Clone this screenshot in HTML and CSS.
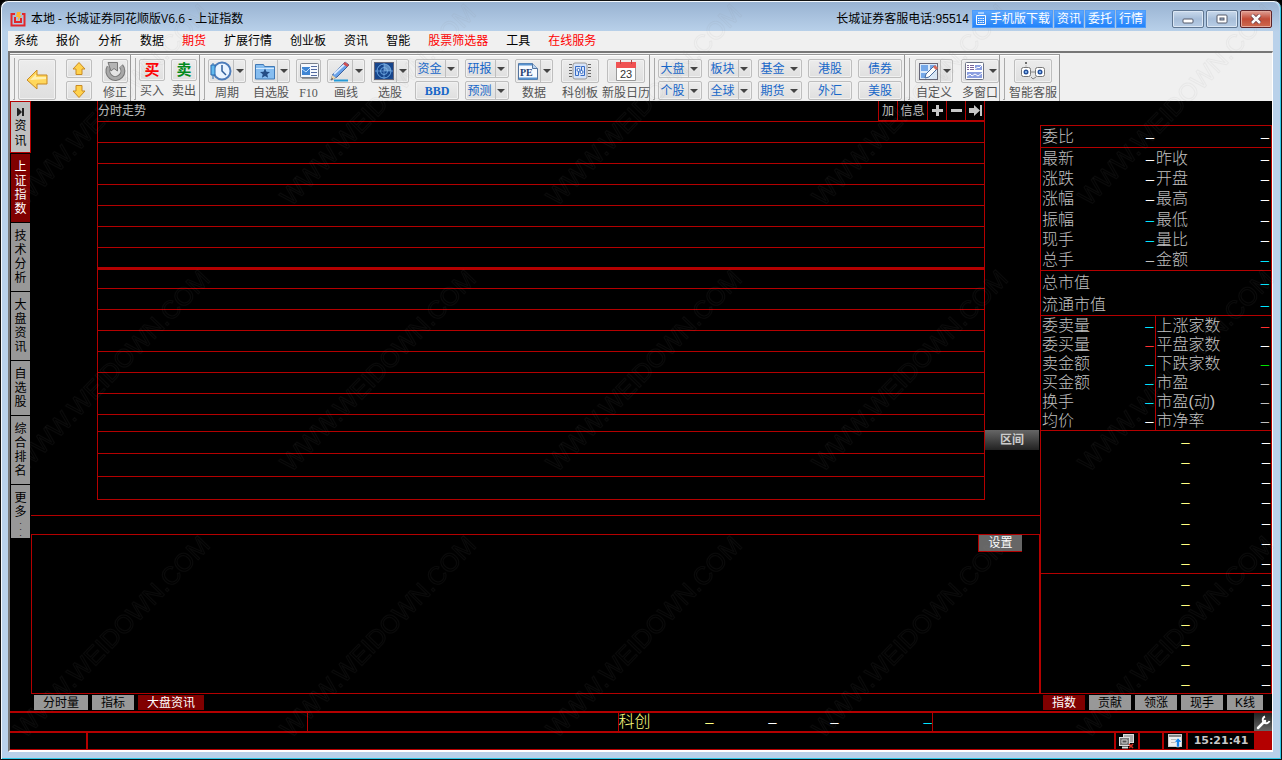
FILE: index.html
```html
<!DOCTYPE html>
<html lang="zh-CN">
<head>
<meta charset="utf-8">
<title>本地 - 长城证券同花顺版V6.6 - 上证指数</title>
<link rel="stylesheet" href="styles.css">
</head>
<body>
<div class="window">
  <header class="titlebar">
    <svg class="logo" width="17" height="15" viewBox="0 0 17 15"><path d="M5 2H1.500v11.500h13V2H12" fill="none" stroke="#e3262b" stroke-width="2"/><path d="M5 5v5h6V6" fill="none" stroke="#e3262b" stroke-width="2"/><path d="M7 0h4L9.500 3.500H12L7.500 9l1-4H6z" fill="#ffb52e"/></svg>
    <h1 class="title">本地 - 长城证券同花顺版V6.6 - 上证指数</h1>
    <span class="phone">长城证券客服电话:95514</span>
    <nav class="quick">
      <a href="#" class="quick-link"><svg width="12" height="14" viewBox="0 0 12 14"><path d="M3 1h6M1.500 3.500h9v9h-9z" fill="none" stroke="#fff"/><path d="M3 6.500h6M3 8.500h6M3 10.500h6" stroke="#fff" stroke-dasharray="1.500 .75"/></svg>手机版下载</a>
      <a href="#" class="quick-link">资讯</a>
      <a href="#" class="quick-link">委托</a>
      <a href="#" class="quick-link">行情</a>
    </nav>
    <div class="controls">
      <button class="control" aria-label="最小化"><svg width="12" height="10"><rect x="1" y="5" width="10" height="4" rx="1" fill="#fff" stroke="#555a6b"/></svg></button>
      <button class="control" aria-label="最大化"><svg width="12" height="10"><rect x="1" y="1" width="10" height="8" rx="1" fill="#fff" stroke="#555a6b"/><rect x="4" y="4" width="4" height="2" fill="#9fb5d0" stroke="#555a6b"/></svg></button>
      <button class="control close" aria-label="关闭"><svg width="12" height="10"><path d="M2 1l8 8M10 1L2 9" stroke="#60303a" stroke-width="4"/><path d="M2 1l8 8M10 1L2 9" stroke="#fff" stroke-width="2.500"/></svg></button>
    </div>
  </header>
  <nav class="menu">
    <a href="#">系统</a><a href="#">报价</a><a href="#">分析</a><a href="#">数据</a><a href="#" class="hot">期货</a><a href="#">扩展行情</a><a href="#">创业板</a><a href="#">资讯</a><a href="#">智能</a><a href="#" class="hot">股票筛选器</a><a href="#">工具</a><a href="#" class="hot">在线服务</a>
  </nav>
  <div class="view">
    <div class="toolbar">
      <div class="group end-2"><i class="grip"></i><div class="tools loose">
        <button class="btn big" aria-label="后退"><svg width="24" height="24" viewBox="0 0 24 24"><path d="M2 12L12 2v5h10v9H12v5z" fill="#ffd75c" stroke="#c98a22" stroke-linejoin="round"/><path d="M5 12l6-6v3h10v2z" fill="#fff0b0"/></svg></button>
        <div class="stack narrow">
          <button class="btn small" aria-label="上"><svg width="16" height="16" viewBox="0 0 16 16"><path d="M8 1.500L14 8h-3v5.500H5V8H2z" fill="#ffd24d" stroke="#c98a22" stroke-linejoin="round"/></svg></button>
          <button class="btn small" aria-label="下"><svg width="16" height="16" viewBox="0 0 16 16"><path d="M8 14.500L14 8h-3V2.500H5V8H2z" fill="#ffd24d" stroke="#c98a22" stroke-linejoin="round"/></svg></button>
        </div>
        <div class="item narrow"><button class="btn" id="fix"><svg width="24" height="22" viewBox="0 0 24 22"><path d="M6 7a7.500 7.500 0 1 0 12-1" fill="none" stroke="#777" stroke-width="5"/><path d="M6 7a7.500 7.500 0 1 0 12-1" fill="none" stroke="#a8a8a8" stroke-width="3"/><path d="M5 2.500h9.500V11L11 8.500 8 11z" fill="#b4b4b4" stroke="#777"/></svg></button><label for="fix">修正</label></div>
      </div></div>
      <div class="group end-2"><i class="grip"></i><div class="tools">
        <div class="item narrow"><button class="btn buy" id="buy">买</button><label for="buy">买入</label></div>
        <div class="item narrow"><button class="btn sell" id="sell">卖</button><label for="sell">卖出</label></div>
      </div></div>
      <div class="group end-4"><i class="grip"></i><div class="tools">
        <div class="item"><button class="btn split" id="period"><svg width="24" height="22" viewBox="0 0 24 22"><circle cx="13" cy="11" r="8.500" fill="#eaf4ff" stroke="#4d7cba" stroke-width="2"/><path d="M13 5v6l4 4" fill="none" stroke="#305f9b" stroke-width="1.500"/><path d="M4 3v16" stroke="#2769ae"/><path d="M2 5h4v10H2z" fill="#62b9ee" stroke="#2769ae"/></svg><span class="arrow"></span></button><label for="period">周期</label></div>
        <div class="item"><button class="btn split" id="fav"><svg width="24" height="22" viewBox="0 0 24 22"><path d="M2.500 19V4.500h8l1 2h10V19z" fill="#86bdf0" stroke="#417ab7"/><path d="M3 8.500h18" stroke="#d4eaff"/><path d="M12 8.500l1.500 3.300 3.500.2-2.700 2.300.8 3.400-3.100-1.800-3.100 1.800.8-3.400L7 12l3.500-.2z" fill="#244e86"/></svg><span class="arrow"></span></button><label for="fav">自选股</label></div>
        <div class="item f10"><button class="btn" id="f10"><svg width="24" height="22" viewBox="0 0 24 22"><rect x="3.500" y="3.500" width="18" height="14" rx="1" fill="#f5f8fd" stroke="#777f8c"/><path d="M5 7h8v8H5z" fill="#3f85d4"/><path d="M5 9l4 3 4-4" stroke="#bfe0ff" fill="none"/><path d="M14 6.500h6M14 9.500h6M14 12.500h6M14 15.500h6" stroke="#536aa0"/><path d="M5 18.500h16" stroke="#999"/></svg></button><label for="f10">F10</label></div>
        <div class="item"><button class="btn split" id="draw"><svg width="24" height="22" viewBox="0 0 24 22"><path d="M6 20.500h14" stroke="#249ad7" stroke-width="2"/><path d="M3 20l2-6L17 2l4 3L9 17z" fill="#6aa2e8" stroke="#3b609c"/><path d="M6 14L18 3" stroke="#d7e9ff" stroke-width="2"/><path d="M17 2l4 3-2 2-4-3z" fill="#d15050"/><path d="M3 20l1-5 4 3z" fill="#efd6a8"/><path d="M3 20l1-2 1 1z" fill="#222"/></svg><span class="arrow"></span></button><label for="draw">画线</label></div>
        <div class="item"><button class="btn split" id="pick"><svg width="24" height="22" viewBox="0 0 24 22"><rect x="2.500" y="2.500" width="19" height="17" fill="#17458c" stroke="#667"/><path d="M12 3v16M3 11h18" stroke="#5789c8"/><circle cx="12" cy="11" r="7" fill="none" stroke="#69a4df"/><circle cx="12" cy="11" r="3.500" fill="none" stroke="#69a4df"/><path d="M12 11V4a7 7 0 0 1 7 7z" fill="#8bbbe8" opacity=".6"/></svg><span class="arrow"></span></button><label for="pick">选股</label></div>
        <div class="stack"><button class="btn small split">资金<span class="arrow"></span></button><button class="btn small bbd">BBD</button></div>
        <div class="stack"><button class="btn small split">研报<span class="arrow"></span></button><button class="btn small split">预测<span class="arrow"></span></button></div>
        <div class="item"><button class="btn split" id="pe"><svg width="24" height="22" viewBox="0 0 24 22"><path d="M2.500 3.500h14l5 5v11h-19z" fill="#f7faff" stroke="#54749f"/><path d="M16.500 3.500v5h5" fill="#b8d4f2" stroke="#54749f"/><path d="M3 18.500h18M3 4.500h13" stroke="#5792d0" stroke-width="2"/><text x="4" y="16" class="pe-text">PE</text></svg><span class="arrow"></span></button><label for="pe">数据</label></div>
        <div class="item wide"><button class="btn" id="star"><svg width="24" height="22" viewBox="0 0 24 22"><path d="M1 4.500h3m-3 3h3m-3 3h3m-3 3h3m-3 3h3M20 4.500h3m-3 3h3m-3 3h3m-3 3h3m-3 3h3" stroke="#666"/><rect x="5" y="3" width="14" height="16" rx="2" fill="#d7e3f7" stroke="#999"/><path d="M10.500 10v5.500h-3v-9h5M13.500 11V6.500h3v9h-4" fill="none" stroke="#376cc5"/><circle cx="10.500" cy="10" r="1.500" fill="#fff" stroke="#376cc5"/><circle cx="13.500" cy="12" r="1.500" fill="#fff" stroke="#376cc5"/></svg></button><label for="star">科创板</label></div>
        <div class="item"><button class="btn" id="cal"><svg width="24" height="22" viewBox="0 0 24 22"><path d="M2.500 3.500h19v17h-19z" fill="#fff" stroke="#999"/><path d="M2 2h20v6H2z" fill="#f05252"/><path d="M6.500 0v4M17.500 0v4" stroke="#b44"/><text x="6" y="18" class="cal-text">23</text></svg></button><label for="cal">新股日历</label></div>
      </div></div>
      <div class="group end-2"><i class="grip"></i><div class="tools">
        <div class="stack"><button class="btn small split">大盘<span class="arrow"></span></button><button class="btn small split">个股<span class="arrow"></span></button></div>
        <div class="stack"><button class="btn small split">板块<span class="arrow"></span></button><button class="btn small split">全球<span class="arrow"></span></button></div>
        <div class="stack"><button class="btn small split joined">基金<span class="arrow"></span></button><button class="btn small split joined">期货<span class="arrow"></span></button></div>
        <div class="stack"><button class="btn small">港股</button><button class="btn small">外汇</button></div>
        <div class="stack"><button class="btn small">债券</button><button class="btn small">美股</button></div>
      </div></div>
      <div class="group"><i class="grip"></i><div class="tools spaced">
        <div class="item"><button class="btn split" id="custom"><svg width="24" height="22" viewBox="0 0 24 22"><rect x="3.500" y="3.500" width="18" height="16" fill="#dceafa" stroke="#667"/><path d="M5 5h7v6H5zM14 5h6v6h-6zM5 13h7v5H5z" fill="#75a8e8"/><path d="M9 18l1-4 8-8 3 3-8 8z" fill="#fff" stroke="#476a9e"/><path d="M17 7l2-2 3 3-2 2z" fill="#d66b5b"/></svg><span class="arrow"></span></button><label for="custom">自定义</label></div>
        <div class="item"><button class="btn split joined" id="multi"><svg width="24" height="22" viewBox="0 0 24 22"><rect x="3.500" y="2.500" width="18" height="17" rx="1" fill="#fff" stroke="#6d7486"/><path d="M5 5.500h7M5 7.500h7M5 9.500h7" stroke="#786299" stroke-dasharray="2 1 6"/><path d="M13 5h7v5h-7zM5 12h15v6H5z" fill="#8a9ee0"/><path d="M13 9l3-2 1 1 3-3M5 16l3-2 2 2 3-2 3 2 4-3" stroke="#fff" fill="none"/></svg><span class="arrow"></span></button><label for="multi">多窗口</label></div>
      </div></div>
      <div class="group service"><i class="grip"></i><div class="tools spaced">
        <div class="item"><button class="btn" id="bot"><svg width="26" height="22" viewBox="0 0 26 22"><circle cx="6" cy="3" r="1" fill="#444"/><path d="M6 5v2" stroke="#bbb"/><rect x="1.500" y="7.500" width="9" height="9" rx="2" fill="#fff" stroke="#777"/><rect x="15.500" y="7.500" width="9" height="9" rx="2" fill="#fff" stroke="#777"/><path d="M10 12h5M11 17l2 2 3-2" stroke="#888" fill="none"/><circle cx="6" cy="12" r="2.500" fill="#254f9a"/><circle cx="20" cy="12" r="2.500" fill="#254f9a"/><circle cx="6" cy="12" r="1" fill="#9cf"/><circle cx="20" cy="12" r="1" fill="#9cf"/></svg></button><label for="bot">智能客服</label></div>
      </div></div>
    </div>

    <main class="main">
      <nav class="rail">
        <button class="rail-tab news"><svg width="9" height="8" viewBox="0 0 9 8"><path d="M1 0h1l4 4-4 4H1z" fill="#222"/><path d="M7 0v8" stroke="#222" stroke-width="2"/></svg><span>资讯</span></button>
        <button class="rail-tab active"><span>上证指数</span></button>
        <button class="rail-tab"><span>技术分析</span></button>
        <button class="rail-tab"><span>大盘资讯</span></button>
        <button class="rail-tab"><span>自选股</span></button>
        <button class="rail-tab"><span>综合排名</span></button>
        <button class="rail-tab more"><span>更多</span><i>.</i><i>.</i><i>.</i></button>
      </nav>

      <section class="center">
        <div class="chart-area">
          <div class="chart">
            <div class="chart-head"><h2>分时走势</h2>
              <div class="chart-tools">
                <button>加</button><button class="info">信息</button>
                <button aria-label="放大"><svg width="11" height="11"><path d="M5.500 0v11M0 5.500h11" stroke="#c8c8c8" stroke-width="3"/></svg></button>
                <button aria-label="缩小"><svg width="11" height="11"><path d="M0 5.500h11" stroke="#c8c8c8" stroke-width="3"/></svg></button>
                <button aria-label="末端"><svg width="13" height="11"><path d="M0 3h5V0l6 5.500L5 11V8H0z" fill="#c8c8c8"/><path d="M12 0v11" stroke="#c8c8c8" stroke-width="2"/></svg></button>
              </div>
            </div>
            <div class="line"></div><div class="line"></div><div class="line"></div><div class="line"></div><div class="line"></div><div class="line"></div>
            <div class="line mid"></div>
            <div class="line"></div><div class="line"></div><div class="line"></div><div class="line"></div><div class="line"></div><div class="line"></div><div class="line"></div>
            <div class="line short"></div><div class="line volume"></div><div class="line volume"></div><div class="line volume"></div>
          </div>
          <button class="range">区间</button>
        </div>
        <div class="time-axis"></div>
        <div class="ticker"></div>
        <div class="news-box"><button class="settings">设置</button></div>
        <div class="tabs"><button class="tab">分时量</button><button class="tab">指标</button><button class="tab active">大盘资讯</button></div>
      </section>

      <aside class="quote">
        <div class="quote-body">
          <table class="figures head">
            <tr><th>委比</th><td>–</td><th></th><td>–</td></tr>
          </table>
          <table class="figures price">
            <tr><th>最新</th><td>–</td><th>昨收</th><td>–</td></tr>
            <tr><th>涨跌</th><td>–</td><th>开盘</th><td>–</td></tr>
            <tr><th>涨幅</th><td>–</td><th>最高</th><td>–</td></tr>
            <tr><th>振幅</th><td class="cyan">–</td><th>最低</th><td>–</td></tr>
            <tr><th>现手</th><td class="cyan">–</td><th>量比</th><td>–</td></tr>
            <tr><th>总手</th><td class="gray">–</td><th>金额</th><td class="cyan">–</td></tr>
          </table>
          <table class="figures cap">
            <tr><th colspan="3">总市值</th><td class="cyan">–</td></tr>
            <tr><th colspan="3">流通市值</th><td class="cyan">–</td></tr>
          </table>
          <table class="figures detail">
            <tr><th>委卖量</th><td class="cyan">–</td><th>上涨家数</th><td class="red">–</td></tr>
            <tr><th>委买量</th><td class="red">–</td><th>平盘家数</th><td>–</td></tr>
            <tr><th>卖金额</th><td class="cyan">–</td><th>下跌家数</th><td class="green">–</td></tr>
            <tr><th>买金额</th><td class="cyan">–</td><th>市盈</th><td class="gray">–</td></tr>
            <tr><th>换手</th><td class="cyan">–</td><th>市盈(动)</th><td class="gray">–</td></tr>
            <tr><th>均价</th><td>–</td><th>市净率</th><td class="gray">–</td></tr>
          </table>
          <table class="ticks upper">
            <tr><td class="yellow">–</td><td>–</td></tr><tr><td class="yellow">–</td><td>–</td></tr><tr><td class="yellow">–</td><td>–</td></tr><tr><td class="yellow">–</td><td>–</td></tr><tr><td class="yellow">–</td><td>–</td></tr><tr><td class="yellow">–</td><td>–</td></tr><tr><td class="yellow">–</td><td>–</td></tr>
          </table>
          <table class="ticks lower">
            <tr><td class="yellow">–</td><td>–</td></tr><tr><td class="yellow">–</td><td>–</td></tr><tr><td class="yellow">–</td><td>–</td></tr><tr><td class="yellow">–</td><td>–</td></tr><tr><td class="yellow">–</td><td>–</td></tr><tr><td class="yellow">–</td><td>–</td></tr>
          </table>
        </div>
        <div class="tabs"><button class="tab active">指数</button><button class="tab">贡献</button><button class="tab">领涨</button><button class="tab">现手</button><button class="tab k">K线</button></div>
      </aside>
    </main>

    <div class="status index">
      <div class="cell"></div><div class="cell second"></div>
      <div class="cell board"><span class="yellow name">科创</span><span class="yellow">–</span><span>–</span><span>–</span><span class="cyan">–</span></div>
      <div class="cell rest"></div>
      <button class="wrench" aria-label="设置"><svg width="15" height="15" viewBox="0 0 15 15"><path d="M2 13l7-7" stroke="#fff" stroke-width="2.500" stroke-linecap="round"/><path d="M9 1.500a3.500 3.500 0 1 0 4.500 4.500" fill="none" stroke="#fff" stroke-width="2"/></svg></button>
    </div>
    <footer class="status foot">
      <div class="cell slot"></div><div class="cell fill"></div>
      <div class="cell net"><svg width="16" height="15" viewBox="0 0 16 15"><rect x="4.500" y=".5" width="10" height="8" fill="#aaa" stroke="#ddd"/><rect x=".5" y="3.500" width="10" height="8" fill="#777" stroke="#ddd"/><path d="M3 6h5v3H3z" fill="#555" stroke="#ccc"/><path d="M3 13.500h6" stroke="#ddd" stroke-width="2"/><path d="M10 10l4 4M14 10l-4 4" stroke="#d83020" stroke-width="1.500"/></svg></div>
      <div class="cell net"></div>
      <div class="cell net"><svg width="15" height="14" viewBox="0 0 15 14"><rect x=".5" y=".5" width="13" height="12" fill="#eee" stroke="#ccc"/><path d="M1 2h12" stroke="#888" stroke-width="2"/><path d="M3 5.500h7M3 8.500h5" stroke="#bbb"/><path d="M10 4l4 4h-2.500v5h-3V8H6.500z" fill="#1683ea" stroke="#fff" stroke-width=".5"/></svg></div>
      <time class="clock">15:21:41</time>
      <div class="alert"></div>
    </footer>
  </div>
  <svg class="watermark" aria-hidden="true"><defs><pattern id="mark" x="-10" y="-50" width="266" height="266" patternUnits="userSpaceOnUse"><text transform="translate(34 256) rotate(-46)">WWW.WEIDOWN.COM</text></pattern></defs><rect width="100%" height="100%" fill="url(#mark)"/></svg>
</div>
</body>
</html>
```
FILE: styles.css
```css
* { box-sizing: border-box; }
:root { --red: #b40000; --line: 1px solid var(--red); }
body { margin: 0; background: #000; font: 12px/16px "Liberation Sans", "Noto Sans CJK SC", sans-serif; }
button { margin: 0; padding: 0; border: 0; font: inherit; color: inherit; background: none; }
a { color: inherit; text-decoration: none; }
h1, h2 { margin: 0; font: inherit; }
svg { display: block; flex: none; }

.window { position: relative; min-height: 100vh; display: flex; flex-direction: column; padding: 0 8px 7px 7px; border: 1px solid #111; border-radius: 8px 8px 0 0; background: #b9d1ea; box-shadow: inset 1px 1px #f4f8fc, inset -1px -1px #2fc8e8; overflow: hidden; }
.titlebar { height: 30px; display: flex; align-items: center; margin: 1px -6px -1px; padding: 4px 7px 0 6px; border-radius: 7px 7px 0 0; background: linear-gradient(#99b3d2, #b9d1ea); }
.logo { margin: 0 4px 0 2px; }
.title { flex: 1; font-family: "Open Sans", "Noto Sans CJK SC", sans-serif; }
.phone { margin-right: 3px; white-space: nowrap; }
.quick { display: flex; gap: 1px; }
.quick-link { display: flex; align-items: center; gap: 3px; height: 18px; padding: 0 2px; color: #fff; background: linear-gradient(#5aa6ff, #2283fb); border: 1px solid #4c9cfb; }
.controls { display: flex; gap: 2px; margin: 0 0 0 26px; }
.control { width: 32px; height: 18px; display: grid; place-items: center; border: 1px solid #5f7691; border-radius: 2px; background: linear-gradient(#c9d9ec, #a7bed9 50%, #b8cde5); box-shadow: inset 0 0 0 1px #dbe7f4; }
.close { border-color: #5b2228; background: linear-gradient(#e2a196, #c34a35 50%, #cf6a4e); box-shadow: inset 0 0 0 1px #e6a99c; }

.menu { height: 20px; display: flex; gap: 18px; padding: 2px 6px 0; background: #f0f0f0; white-space: nowrap; }
.hot { color: #f00; }
.view { flex: 1; display: flex; flex-direction: column; border: solid; border-width: 2px 1px 2px 2px; border-color: #777 #fff #fff #777; background: #000; }

.toolbar { height: 48px; display: flex; padding-top: 1px; background: #f0f0f0; color: #555; }
.group { display: flex; border-top: 1px solid #999; border-right: 1px solid #999; box-shadow: inset 0 1px #fff; }
.end-2 { padding-right: 2px; }
.end-4 { padding-right: 4px; }
.grip { width: 2px; margin: 3px 0 1px 3px; border: solid #aaa; border-width: 0 1px 1px 0; }
.tools { display: flex; gap: 6px; padding: 4px 0 0 3px; }
.loose { gap: 10px; }
.spaced { gap: 8px; padding-left: 5px; }
.service { padding-right: 7px; }
.service .tools { padding-left: 9px; }
.item { width: 38px; display: flex; flex-direction: column; align-items: center; white-space: nowrap; }
.item label { line-height: 20px; }
.narrow { width: 26px; }
.wide { width: 42px; }
.wide .btn { width: 38px; }
.f10 { width: 25px; font-family: "Liberation Serif", serif; }
.btn { width: 100%; height: 25px; display: flex; justify-content: center; align-items: center; border: 1px solid #bebebe; border-radius: 2px; background: linear-gradient(#ececec, #dfdfdf); box-shadow: inset 0 0 0 1px #f1f1f1; }
.big { width: 38px; height: 41px; }
.stack { width: 44px; display: flex; flex-direction: column; gap: 3px; }
.stack.narrow { width: 26px; }
.small { height: 19px; color: #1767c8; }
.bbd { font: bold 12px/16px "Liberation Serif", serif; }
.buy, .sell { font-size: 15px; font-weight: bold; color: #f00; }
.sell { color: #008a1c; }
.arrow { width: 12px; align-self: stretch; flex: none; display: grid; place-items: center; border-left: 1px solid #bebebe; }
.small .arrow { margin-left: 3px; }
.arrow::before { content: ""; border: 4px solid transparent; border-top-color: #444; border-bottom: 0; }
.joined .arrow { border-color: transparent; }
.pe-text { font: bold 10px "Liberation Serif", serif; fill: #253f70; }
.cal-text { font: 11px "Liberation Sans", sans-serif; fill: #333; }

.main { flex: 1; display: grid; grid-template-columns: 21px minmax(0, 1fr) 232px; color: #c0c0c0; }
.rail { display: flex; flex-direction: column; gap: 1px; }
.rail-tab { display: flex; flex-direction: column; align-items: center; width: 19px; margin-left: 1px; padding: 6px 0; line-height: 14px; color: #000; background: #989898; }
.rail-tab span { width: 12px; }
.rail-tab.news { width: 21px; margin: 0; gap: 3px; padding: 6px 0 3px; border: var(--line); background: #c0c0c0; line-height: 15px; }
.rail-tab.active { color: #fff; background: #800000; }
.rail-tab.more { padding-bottom: 1px; }
.more i { font: bold 6px/6px "Liberation Sans", sans-serif; }

.center { display: flex; flex-direction: column; min-width: 0; }
.chart-area { display: flex; padding-left: 66px; }
.chart { flex: 1; border: solid var(--red); border-width: 0 1px; }
.chart-head { height: 21px; display: flex; justify-content: space-between; align-items: center; border-bottom: var(--line); }
.chart-tools { display: flex; align-self: stretch; border-bottom: var(--line); }
.chart-tools button { width: 19px; display: grid; place-items: center; border-left: var(--line); }
.chart-tools .info { width: 30px; }
.line { height: 21px; border-bottom: var(--line); }
.mid { height: 20px; box-shadow: 0 2px var(--red); }
.short { height: 17px; }
.volume { height: 23px; }
.short + .volume { height: 22px; }
.range { align-self: end; width: 54px; height: 20px; margin: 0 1px 50px 0; background: linear-gradient(#666, #222); color: #ccc; font-weight: bold; }
.time-axis { height: 16px; border-bottom: var(--line); }
.ticker { height: 18px; }
.news-box { flex: 1; display: flex; justify-content: flex-end; align-items: flex-start; padding-right: 17px; border: var(--line); }
.settings { width: 44px; height: 17px; border: solid var(--red); border-width: 0 0 1px 1px; background: #666; color: #fff; }
.tabs { height: 17px; display: flex; gap: 4px; padding: 1px 3px; }
.tab { height: 15px; padding: 1px 9px 0; line-height: 15px; white-space: nowrap; color: #000; background: #989898; }
.tab.active { color: #fff; background: #800000; }
.tab.k { padding: 1px 8px 0; }

.quote { display: flex; flex-direction: column; padding-top: 24px; }
.quote-body { flex: 1; display: flex; flex-direction: column; border: var(--line); font-size: 16px; }
.quote-body table { width: 100%; border-collapse: collapse; table-layout: fixed; border-bottom: var(--line); }
.quote-body th { width: 36%; padding: 0; font-weight: 300; line-height: 19px; text-align: left; white-space: nowrap; }
.quote-body td { width: 14%; padding: 0 2px 0 0; font-size: 15px; line-height: 19px; text-align: right; color: #fff; }
.figures th:first-child { padding-left: 1px; }
.head { height: 22px; }
.price { height: 123px; }
.cap { height: 45px; }
.quote-body .cap th, .quote-body .cap td { padding-top: 2px; }
.detail { height: 115px; }
.detail th:nth-child(3) { border-left: var(--line); }
.quote-body .ticks td { width: 35%; padding-right: 1px; }
.quote-body .ticks td:first-child { width: 65%; }
.upper { height: 143px; }
.quote-body .lower { flex: 1; border: 0; }
.quote-body .cyan, .cyan { color: #00e5ff; }
.quote-body .red { color: #ff3030; }
.quote-body .green { color: #00e000; }
.quote-body .gray { color: #c0c0c0; }
.quote-body .yellow, .yellow { color: #ffff80; }

.status { display: flex; border-top: 2px solid var(--red); color: #fff; }
.cell { border-right: var(--line); }
.index { height: 20px; font-size: 15px; line-height: 18px; }
.index .cell { flex: 298 0 0; }
.index .second { flex-grow: 310; }
.index .board { flex-grow: 314; display: grid; grid-template-columns: 60fr 35fr 63fr 62fr 93fr; text-align: right; }
.index .rest { flex-grow: 322; border: 0; }
.name { font-size: 16px; font-weight: 300; text-align: left; }
.wrench { width: 18px; display: grid; place-items: center; background: linear-gradient(#222, #666); }
.foot { height: 19px; border-bottom: var(--line); }
.foot .cell { border-right-width: 2px; }
.slot { width: 78px; }
.fill { flex: 1; }
.net { width: 24px; display: grid; place-items: center; }
.clock { width: 66px; text-align: center; color: #c8c8c8; font: bold 11px/16px "DejaVu Sans", sans-serif; }
.alert { width: 18px; background: var(--red); }

.watermark { position: absolute; inset: 0; width: 100%; height: 100%; pointer-events: none; }
.watermark text { font: 25px "Liberation Sans", sans-serif; fill: none; stroke: #808080; stroke-opacity: .08; }
```
